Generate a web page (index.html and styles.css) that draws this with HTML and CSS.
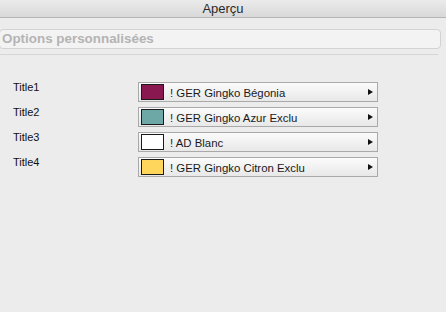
FILE: index.html
```html
<!DOCTYPE html>
<html lang="fr">
<head>
<meta charset="utf-8">
<title>Aperçu</title>
<link rel="stylesheet" href="styles.css">
</head>
<body>
<div class="window">
  <div class="titlebar">Aperçu</div>
  <div class="search">Options personnalisées</div>
  <div class="separator"></div>
  <div class="rows">
    <div class="label">Title1</div>
    <div class="popup"><span class="swatch begonia"></span><span class="name">! GER Gingko Bégonia</span><span class="arrow"></span></div>
    <div class="label">Title2</div>
    <div class="popup"><span class="swatch azur"></span><span class="name">! GER Gingko Azur Exclu</span><span class="arrow"></span></div>
    <div class="label">Title3</div>
    <div class="popup"><span class="swatch blanc"></span><span class="name">! AD Blanc</span><span class="arrow"></span></div>
    <div class="label">Title4</div>
    <div class="popup"><span class="swatch citron"></span><span class="name">! GER Gingko Citron Exclu</span><span class="arrow"></span></div>
  </div>
</div>
</body>
</html>
```
FILE: styles.css
```css
html, body {
  margin: 0;
  padding: 0;
  background: #ececec;
}
.window {
  width: 446px;
  height: 312px;
  background: #ececec;
  font-family: "Liberation Sans", Arial, sans-serif;
  color: #111;
  overflow: hidden;
}
.titlebar {
  height: 17px;
  line-height: 17px;
  border-bottom: 1px solid #b4b4b4;
  background: linear-gradient(#ebebeb, #d8d8d8);
  text-align: center;
  font-size: 13px;
  color: #2a2a2a;
}
.search {
  margin: 11px 5px 0 -1px;
  height: 18px;
  line-height: 18px;
  border: 1px solid #d3d3d3;
  border-radius: 4px;
  background: #f3f3f3;
  font-size: 13.4px;
  font-weight: bold;
  color: #b4b4b4;
  padding-left: 2px;
}
.separator {
  margin: 5px 8px 0 0;
  height: 1px;
  background: #d6d6d6;
}
.rows {
  margin-top: 27px;
  display: grid;
  grid-template-columns: 125px 240px;
  grid-auto-rows: 20px;
  row-gap: 5px;
  padding-left: 13px;
}
.label {
  font-size: 11px;
  line-height: 12px;
  margin-top: -1px;
  color: #111;
}
.popup {
  box-sizing: border-box;
  height: 20px;
  border: 1px solid #a9a9a9;
  background: linear-gradient(#fbfbfb, #e8e8e8);
  display: flex;
  align-items: center;
  font-size: 11.4px;
  color: #1a1a1a;
}
.swatch {
  box-sizing: border-box;
  width: 23px;
  height: 16px;
  margin-left: 2px;
  border: 1px solid #1a1a1a;
}
.begonia { background: #8a1850; }
.azur { background: #6ea8a6; }
.blanc { background: #ffffff; }
.citron { background: #fed65c; }
.name {
  margin-left: 6px;
  flex: 1;
  padding-top: 1px;
}
.arrow {
  width: 0;
  height: 0;
  border-top: 3.5px solid transparent;
  border-bottom: 3.5px solid transparent;
  border-left: 5px solid #111;
  margin-right: 4px;
}
```
